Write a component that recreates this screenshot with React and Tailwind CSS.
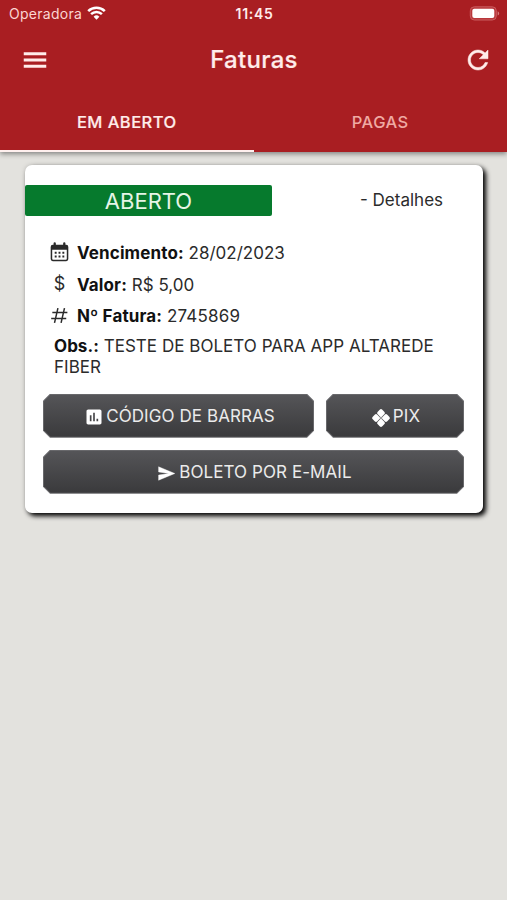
import React from 'react';

function Glyph({ className, children }) {
  return (
    <svg viewBox="0 0 24 24" fill="currentColor" className={`block shrink-0 ${className}`}>
      {children}
    </svg>
  );
}

function StatusBar() {
  return (
    <div className="grid h-7 grid-cols-3 items-center pl-[9px] pr-[7px]">
      <div className="flex items-center gap-[5px]">
        <span className="text-[14px] leading-5 tracking-[0.28px] text-[#fbd5d2]">Operadora</span>
        <svg viewBox="0 0 19 14" className="mt-[-2px] h-[14px] w-[19px]" fill="none" stroke="#fff" strokeWidth="2.5">
          <path d="M1.2 5.1a11.8 11.8 0 0 1 16.6 0" />
          <path d="M4.1 8.2a7.7 7.7 0 0 1 10.8 0" />
          <path d="M6.6 10.8a4.1 4.1 0 0 1 5.8 0L9.5 13.7z" fill="#fff" stroke="none" />
        </svg>
      </div>
      <span className="text-center text-[14px] font-semibold leading-5 tracking-[0.7px] text-[#ffeceb]">11:45</span>
      <svg viewBox="0 0 31 15" className="mb-px h-[15px] w-[31px] justify-self-end">
        <rect x="1.3" y="0.8" width="26" height="13.2" rx="4" fill="#b9373b" stroke="#c95c5f" strokeWidth="1" />
        <rect x="3.3" y="2.8" width="22" height="9.2" rx="2" fill="#fff" />
        <path d="M28.7 5.2c2 .8 2 3.6 0 4.4z" fill="#d57b7d" />
      </svg>
    </div>
  );
}

function Header() {
  return (
    <header className="relative z-10 flex h-[152px] flex-col bg-[#a91e22] shadow-[0_2px_5px_rgba(0,0,0,0.42)]">
      <StatusBar />
      <div className="flex h-16 items-center justify-between pl-5 pr-[14px] text-[#ffecea]">
        <Glyph className="h-[30px] w-[30px]">
          <path d="M3 18.2h18v-2.4H3v2.400zm0-5h18v-2.400H3v2.400zm0-7.400v2.400h18V5.800H3z" />
        </Glyph>
        <h1 className="-mr-[3px] -ml-[8px] text-[24px] font-medium leading-8 tracking-[0.3px] [-webkit-text-stroke:0.2px_#ffecea]">Faturas</h1>
        <Glyph className="h-[30px] w-[30px]">
          <path
            stroke="currentColor"
            strokeWidth="0.4"
            d="M17.65 6.35C16.2 4.9 14.21 4 12 4c-4.42 0-7.99 3.58-7.99 8s3.57 8 7.99 8c3.73 0 6.84-2.55 7.73-6h-2.08c-.82 2.33-3.04 4-5.65 4-3.31 0-6-2.69-6-6s2.69-6 6-6c1.66 0 3.14.69 4.22 1.78L13 11h7V4l-2.35 2.35z"
          />
        </Glyph>
      </div>
      <nav className="grid flex-1 grid-cols-2 text-[16.5px] font-medium tracking-[0.45px]">
        <div className="border-b-[2.5px] border-[#fff0ee] pt-[18px] text-center leading-6 text-[#ffecea] [-webkit-text-stroke:0.2px_#ffecea]">EM ABERTO</div>
        <div className="pt-[18px] text-center leading-6 text-[#efa9a3]">PAGAS</div>
      </nav>
    </header>
  );
}

function Field({ icon, label, value }) {
  return (
    <div className="flex h-[31.6px] items-center">
      <span className="flex w-[27px] shrink-0">{icon}</span>
      <span>
        <b className="font-bold tracking-[0.13px] text-[#111]">{label}</b> {value}
      </span>
    </div>
  );
}

function ActionButton({ icon, label, className }) {
  return (
    <button
      className={`h-11 bg-[#68686b] p-px [clip-path:polygon(7px_0,calc(100%-7px)_0,100%_7px,100%_calc(100%-7px),calc(100%-7px)_100%,7px_100%,0_calc(100%-7px),0_7px)] ${className}`}
    >
      <span className="flex h-full items-center justify-center bg-linear-to-b from-[#555558] to-[#3a3a3c] pl-[2px] pt-[2px] text-[17px] text-[#ebebeb] [clip-path:polygon(6.5px_0,calc(100%-6.5px)_0,100%_6.5px,100%_calc(100%-6.5px),calc(100%-6.5px)_100%,6.5px_100%,0_calc(100%-6.5px),0_6.5px)]">
        {icon}
        <span className="tracking-[0.08px]">{label}</span>
      </span>
    </button>
  );
}

const calendarIcon = (
  <Glyph className="-mt-[2px] -ml-[2px] h-[23px] w-[23px] text-[#2a2a2a]">
    <path
      fillRule="evenodd"
      d="M5.800 2.500a1.200 1.200 0 0 1 2.400 0V4h7.600V2.500a1.200 1.200 0 0 1 2.400 0V4h.8a2.200 2.200 0 0 1 2.200 2.200v12.600a2.200 2.200 0 0 1-2.200 2.200H5a2.200 2.200 0 0 1-2.200-2.200V6.200A2.200 2.200 0 0 1 5 4h.8zM4.400 9.200v9.400q0 .9.900.9h13.400q.9 0 .9-.9V9.200zM7 11.200h2v2H7v-2zm4 0h2v2h-2v-2zm4 0h2v2h-2v-2zm-8 4h2v2H7v-2zm4 0h2v2h-2v-2zm4 0h2v2h-2v-2z"
    />
  </Glyph>
);

const hashIcon = (
  <Glyph className="-mt-[2px] -ml-px h-[21px] w-[21px] text-[#2a2a2a]">
    <path fill="none" stroke="currentColor" strokeWidth="1.7" d="M10.200 3.500L6.300 20.500M17.700 3.500l-3.900 17M3.800 8.700h17.200M2.500 15.300h17.200" />
  </Glyph>
);

const barsIcon = (
  <Glyph className="mr-[2px] mt-px h-5 w-5 text-white">
    <path d="M19 3H5c-1.100 0-2 .9-2 2v14c0 1.100.9 2 2 2h14c1.100 0 2-.9 2-2V5c0-1.100-.9-2-2-2zM9 17H7v-7h2v7zm4 0h-2V7h2v10zm4 0h-2v-3h2v3z" />
  </Glyph>
);

const pixIcon = (
  <Glyph className="mr-[3px] mt-[2px] h-[18px] w-[18px] text-white">
    <g transform="rotate(45 12 12)">
      <rect x="3" y="3" width="8.600" height="8.600" rx="2.500" />
      <rect x="12.400" y="3" width="8.600" height="8.600" rx="2.500" />
      <rect x="3" y="12.400" width="8.600" height="8.600" rx="2.500" />
      <rect x="12.400" y="12.400" width="8.600" height="8.600" rx="2.500" />
      <rect x="9.500" y="9.500" width="5" height="5" fillOpacity="0.450" />
    </g>
  </Glyph>
);

const sendIcon = (
  <Glyph className="mr-[3px] mt-[2px] h-[19px] w-[19px] text-white">
    <path stroke="currentColor" strokeWidth="0.5" strokeLinejoin="round" d="M2.010 20.500L22.500 12 2.010 3.500 2 10l13 2-13 2z" />
  </Glyph>
);

function InvoiceCard() {
  return (
    <article className="ml-[25px] mt-[13px] h-[348px] w-[458px] rounded-[7px] bg-white pt-5 text-[17px] text-[#2b2b2b] shadow-[3px_3px_5px_#000,0_0_5px_rgba(0,0,0,0.15)]">
      <div className="flex h-[31px] items-center">
        <div className="h-[31px] w-[247px] rounded-[2px] bg-[#067a2d] text-center text-[22px] leading-[32px] text-[#e6f5e6]">ABERTO</div>
        <div className="-mt-px ml-[88px] text-[17px] leading-6">- Detalhes</div>
      </div>
      <div className="mt-[22px] pl-[25px]">
        <Field icon={calendarIcon} label="Vencimento:" value="28/02/2023" />
        <Field icon={<span className="-mt-[3px] w-[19px] text-center text-[18px]">$</span>} label="Valor:" value="R$ 5,00" />
        <Field icon={hashIcon} label="Nº Fatura:" value={<span className="tracking-[0.2px]">2745869</span>} />
      </div>
      <p className="ml-[29px] mt-[3px] w-[400px] leading-[21px] tracking-[0.03px]">
        <b className="font-bold text-[#111]">Obs.:</b> TESTE DE BOLETO PARA APP ALTAREDE
        <br />
        FIBER
      </p>
      <div className="ml-[18px] mt-[16px] flex w-[421px] flex-wrap gap-3">
        <ActionButton icon={barsIcon} label="CÓDIGO DE BARRAS" className="w-[271px]" />
        <ActionButton icon={pixIcon} label="PIX" className="w-[138px]" />
        <ActionButton icon={sendIcon} label="BOLETO POR E-MAIL" className="w-[421px]" />
      </div>
    </article>
  );
}

export default function App() {
  return (
    <main className="h-[900px] w-[507px] overflow-hidden bg-[#e3e2de] font-['Inter','Liberation_Sans',sans-serif]">
      <Header />
      <InvoiceCard />
    </main>
  );
}
